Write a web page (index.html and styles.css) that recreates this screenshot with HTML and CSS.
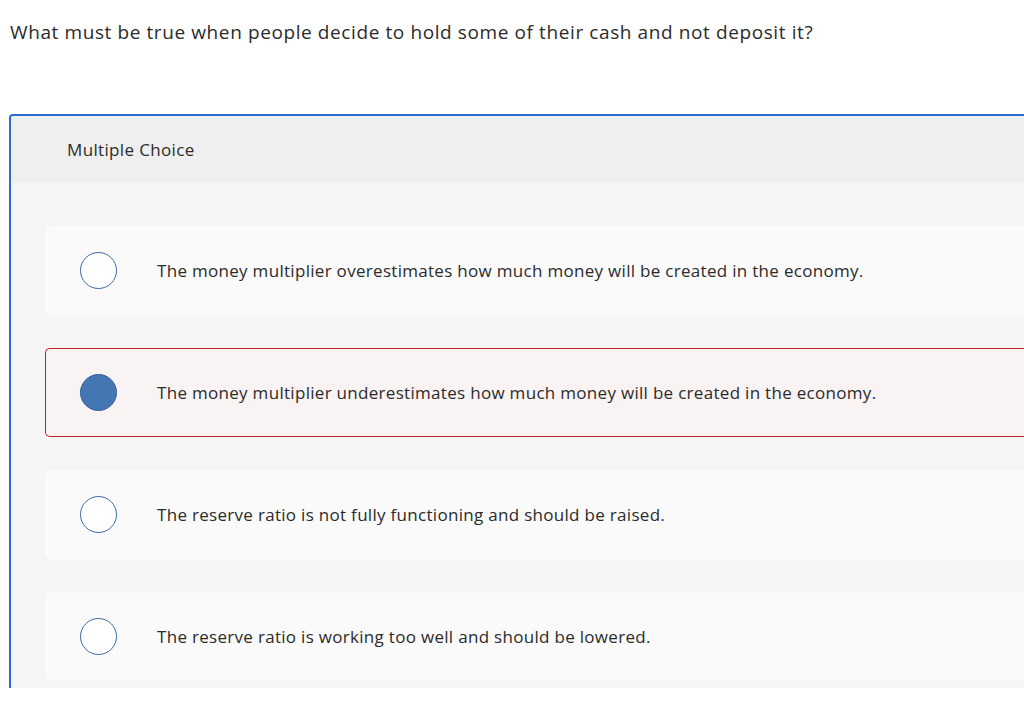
FILE: index.html
```html
<!DOCTYPE html>
<html>
<head>
<meta charset="utf-8">
<link rel="stylesheet" href="styles.css">
</head>
<body>
<div class="question">What must be true when people decide to hold some of their cash and not deposit it?</div>
<div class="card">
  <div class="card-head">Multiple Choice</div>
  <div class="card-body">
    <div class="option">
      <span class="radio"></span>
      <span class="label">The money multiplier overestimates how much money will be created in the economy.</span>
    </div>
    <div class="option selected">
      <span class="radio"></span>
      <span class="label">The money multiplier underestimates how much money will be created in the economy.</span>
    </div>
    <div class="option">
      <span class="radio"></span>
      <span class="label">The reserve ratio is not fully functioning and should be raised.</span>
    </div>
    <div class="option">
      <span class="radio"></span>
      <span class="label">The reserve ratio is working too well and should be lowered.</span>
    </div>
  </div>
</div>
</body>
</html>
```
FILE: styles.css
```css
html, body {
  margin: 0;
  padding: 0;
  background: #ffffff;
  overflow: hidden;
  height: 701px;
}
body {
  font-family: "Open Sans", "Liberation Sans", sans-serif;
  color: #2b2b2b;
}
.question {
  padding: 19px 0 0 10px;
  height: 114px;
  box-sizing: border-box;
  font-size: 19px;
  letter-spacing: 0.6px;
  line-height: 26px;
}
.card {
  margin-left: 9px;
  border-top: 2px solid #2a6ccf;
  border-left: 2px solid #2a6ccf;
  border-top-left-radius: 4px;
  background: #f5f5f5;
  height: 572px;
  overflow: hidden;
}
.card-head {
  background: #efefef;
  height: 66px;
  display: flex;
  align-items: center;
  padding-left: 56px;
  font-size: 17px;
  letter-spacing: 0.35px;
}
.card-body {
  padding: 44px 0 0 34px;
  display: flex;
  flex-direction: column;
  gap: 33px;
}
.option {
  height: 89px;
  box-sizing: border-box;
  background: #fafafa;
  border-radius: 5px 0 0 5px;
  display: flex;
  align-items: center;
  padding-left: 34px;
  border: 1px solid transparent;
  border-right: none;
}
.option.selected {
  background: #f9f3f3;
  border-color: #b8262a;
}
.radio {
  width: 35px;
  height: 35px;
  border-radius: 50%;
  border: 1.5px solid #3e6ba3;
  background: #ffffff;
  flex: none;
}
.selected .radio {
  background: #4576b4;
  border-color: #36629a;
}
.label {
  margin-left: 40px;
  font-size: 17px;
  letter-spacing: 0.3px;
}
```
